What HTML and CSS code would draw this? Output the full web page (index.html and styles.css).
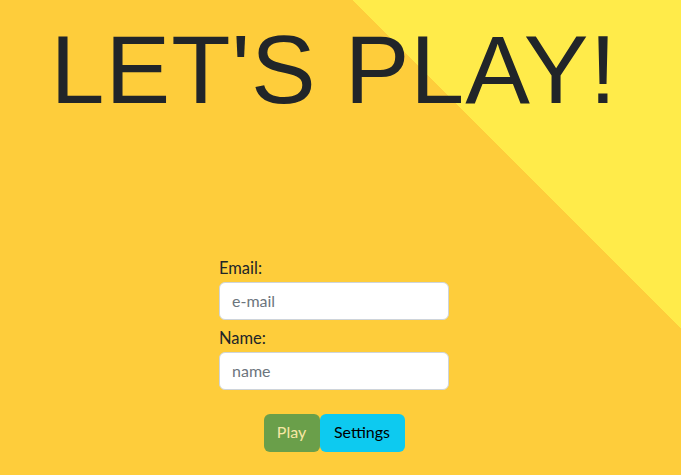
FILE: index.html
```html
<!DOCTYPE html>
<html lang="en">
<head>
<meta charset="utf-8">
<title>Let's Play</title>
<link rel="stylesheet" href="styles.css">
</head>
<body>
<div class="page">
  <h1 class="title">LET'S PLAY!</h1>
  <form class="form">
    <label class="label" for="email">Email:</label>
    <input class="field" id="email" type="email" placeholder="e-mail">
    <label class="label" for="name">Name:</label>
    <input class="field" id="name" type="text" placeholder="name">
    <div class="actions">
      <button type="button" class="btn btn-play">Play</button>
      <button type="button" class="btn btn-settings">Settings</button>
    </div>
  </form>
</div>
</body>
</html>
```

FILE: styles.css
```css
html, body {
  margin: 0;
  padding: 0;
}

.page {
  box-sizing: border-box;
  min-height: 475px;
  padding: 12px 13px 0 0;
  display: flex;
  flex-direction: column;
  align-items: center;
  background: linear-gradient(225deg, #ffeb4a 0, #ffeb4a 232px, #fecd3b 232px, #fecd3b 100%);
  font-family: Lato, "Noto Sans", sans-serif;
  color: #212529;
}

.title {
  margin: 0;
  font-family: "Liberation Sans", Arial, sans-serif;
  font-weight: 400;
  font-size: 97px;
  letter-spacing: 1px;
  line-height: 116px;
  color: #212529;
  white-space: nowrap;
}

.form {
  width: 230px;
  margin-top: 122px;
  display: flex;
  flex-direction: column;
}

.label {
  font-size: 16.5px;
  line-height: 24px;
  margin-top: 6px;
  margin-bottom: 2px;
}

.field {
  box-sizing: border-box;
  width: 100%;
  height: 38px;
  padding: 5px 12px 7px;
  border: 1px solid #ced4da;
  border-radius: 6px;
  background: #fff;
  font-family: inherit;
  font-size: 16px;
  color: #212529;
  outline: none;
}

.field::placeholder {
  color: #6c757d;
}

.actions {
  margin-top: 24px;
  display: flex;
  justify-content: center;
}

.btn {
  height: 38px;
  padding: 5px 12px 7px;
  border: 0;
  border-radius: 6px;
  font-family: inherit;
  font-size: 16px;
  line-height: 24px;
  cursor: pointer;
}

.btn-play {
  width: 56px;
  background: #6a9f4a;
  color: #f7e7a4;
}

.btn-settings {
  width: 85px;
  background: #0dcaf0;
  color: #000;
}
```
